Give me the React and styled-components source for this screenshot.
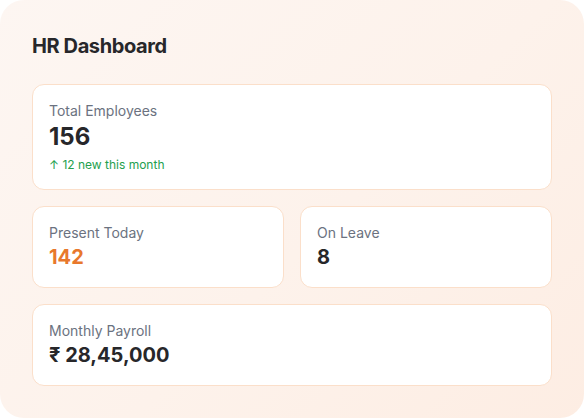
import React from "react";
import styled, { createGlobalStyle } from "styled-components";

const GlobalStyle = createGlobalStyle`
  body {
    margin: 0;
    background: #ffffff;
    font-family: Inter, "Liberation Sans", sans-serif;
  }
`;

const stats = {
  total: { label: "Total Employees", value: "156", note: "12 new this month" },
  present: { label: "Present Today", value: "142" },
  leave: { label: "On Leave", value: "8" },
  payroll: { label: "Monthly Payroll", value: "₹ 28,45,000" },
};

const App = () => {
  return (
    <>
      <GlobalStyle />
      <Panel>
        <Title>HR Dashboard</Title>
        <Stack>
          <Card>
            <Label>{stats.total.label}</Label>
            <Value size="big">{stats.total.value}</Value>
            <Note>↑ {stats.total.note}</Note>
          </Card>
          <Row>
            <Card>
              <Label>{stats.present.label}</Label>
              <Value accent>{stats.present.value}</Value>
            </Card>
            <Card>
              <Label>{stats.leave.label}</Label>
              <Value>{stats.leave.value}</Value>
            </Card>
          </Row>
          <Card>
            <Label>{stats.payroll.label}</Label>
            <Value>{stats.payroll.value}</Value>
          </Card>
        </Stack>
      </Panel>
    </>
  );
};

export default App;

const Panel = styled.div`
  width: 584px;
  box-sizing: border-box;
  padding: 32px;
  border-radius: 24px;
  background: linear-gradient(135deg, #fdf6f2 0%, #fdf2eb 55%, #fdede3 100%);
`;

const Title = styled.h2`
  margin: 0 0 24px;
  font-size: 20px;
  line-height: 28px;
  font-weight: 700;
  letter-spacing: -0.02em;
  color: #27272a;
`;

const Stack = styled.div`
  display: flex;
  flex-direction: column;
  gap: 16px;
`;

const Row = styled.div`
  display: grid;
  grid-template-columns: 1fr 1fr;
  gap: 16px;
`;

const Card = styled.div`
  background: #ffffff;
  border: 1px solid #fbdfca;
  border-radius: 12px;
  padding: 16px;
`;

const Label = styled.div`
  font-size: 14px;
  line-height: 20px;
  color: #6b7280;
`;

const Value = styled.div`
  font-size: ${(p) => (p.size === "big" ? "24px" : "20px")};
  line-height: ${(p) => (p.size === "big" ? "32px" : "28px")};
  font-weight: 700;
  color: ${(p) => (p.accent ? "#e8782c" : "#27272a")};
`;

const Note = styled.div`
  margin-top: 4px;
  font-size: 12px;
  line-height: 16px;
  color: #23a04e;
`;
